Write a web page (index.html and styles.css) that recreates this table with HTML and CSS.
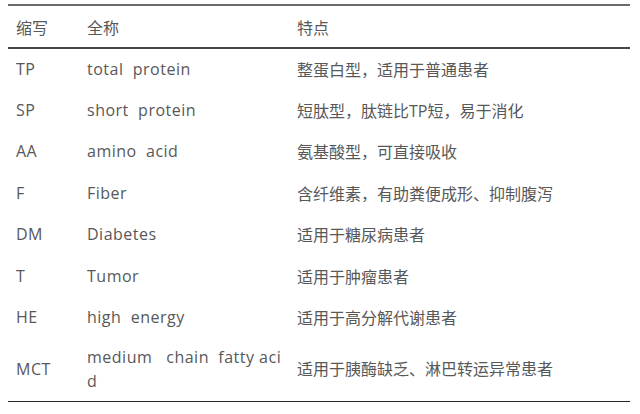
FILE: index.html
```html
<!DOCTYPE html>
<html lang="zh-CN">
<head>
<meta charset="utf-8">
<link rel="stylesheet" href="styles.css">
</head>
<body>
<table class="abbr">
  <colgroup><col class="c1"><col class="c2"><col class="c3"></colgroup>
  <thead>
    <tr><th>缩写</th><th>全称</th><th>特点</th></tr>
  </thead>
  <tbody>
    <tr><td class="lat">TP</td><td class="lat">total&nbsp; protein</td><td>整蛋白型，适用于普通患者</td></tr>
    <tr><td class="lat">SP</td><td class="lat">short&nbsp; protein</td><td>短肽型，肽链比TP短，易于消化</td></tr>
    <tr><td class="lat">AA</td><td class="lat">amino&nbsp; acid</td><td>氨基酸型，可直接吸收</td></tr>
    <tr><td class="lat">F</td><td class="lat">Fiber</td><td>含纤维素，有助粪便成形、抑制腹泻</td></tr>
    <tr><td class="lat">DM</td><td class="lat">Diabetes</td><td>适用于糖尿病患者</td></tr>
    <tr><td class="lat">T</td><td class="lat">Tumor</td><td>适用于肿瘤患者</td></tr>
    <tr><td class="lat">HE</td><td class="lat">high&nbsp; energy</td><td>适用于高分解代谢患者</td></tr>
    <tr class="tall"><td class="lat">MCT</td><td class="lat nowrap">medium&nbsp;&nbsp; chain&nbsp; fatty aci<br>d</td><td>适用于胰酶缺乏、淋巴转运异常患者</td></tr>
  </tbody>
</table>
</body>
</html>
```
FILE: styles.css
```css
html, body {
  margin: 0;
  background: #fff;
}
body {
  padding: 4px 10px 0 8px;
  font-family: "Open Sans", "Noto Sans CJK SC", sans-serif;
  font-size: 16px;
  color: #585858;
}
.abbr {
  width: 622px;
  border-collapse: collapse;
  table-layout: fixed;
  border-top: 2px solid #6a6a6a;
  border-bottom: 1.5px solid #222;
}
.c1 { width: 71px; }
.c2 { width: 210px; }
.c3 { width: 341px; }
.abbr th, .abbr td {
  text-align: left;
  font-weight: normal;
  padding: 0 0 0 8px;
  vertical-align: middle;
}
.abbr .lat {
  letter-spacing: 0.5px;
}
.abbr .nowrap {
  white-space: nowrap;
}
.abbr thead tr {
  height: 43px;
  border-bottom: 2px solid #444;
}
.abbr tbody tr {
  height: 41.4px;
}
.abbr tbody tr.tall {
  height: 64px;
}
.tall td {
  line-height: 24px;
}
```
